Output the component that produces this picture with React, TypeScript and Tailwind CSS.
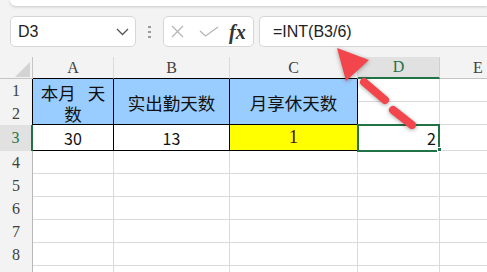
import React from "react";

const cjk = { fontFamily: '"Noto Sans CJK SC", "Noto Sans", sans-serif' };
const serif = { fontFamily: '"Liberation Serif", "DejaVu Serif", serif' };
const sans = { fontFamily: '"Liberation Sans", Arial, sans-serif' };

function ColHead({ label, cls }: { label: string; cls: string }) {
  return (
    <div className={`flex items-center justify-center text-[16px] text-[#3f3f3f] ${cls}`} style={serif}>
      {label}
    </div>
  );
}

function RowHead({ n, cls }: { n: string; cls: string }) {
  return (
    <div className={`flex items-center justify-center text-[16px] text-[#3f3f3f] ${cls}`} style={serif}>
      {n}
    </div>
  );
}

function Empty({ last }: { last?: boolean }) {
  return <div className={last ? "border-b border-[#dadada] bg-white" : "border-b border-r border-[#dadada] bg-white"} />;
}

export default function App() {
  const emptyRows = ["4", "5", "6", "7", "8", ""];
  return (
    <div className="relative w-[487px] h-[272px] overflow-hidden bg-[#f3f3f3]">
      <div className="ml-[10px] h-[6px] bg-white rounded-bl-[8px] shadow-[0_1px_3px_rgba(0,0,0,0.18)]" />

      <div className="flex items-center h-[31px] mt-[10px] pl-[10px]">
        <div className="flex items-center justify-between w-[126px] h-full bg-white border border-[#d6d6d6] rounded-[5px] pl-[7px] pr-[6px]">
          <span className="text-[16px] text-[#222]" style={sans}>D3</span>
          <svg width="13" height="8" viewBox="0 0 13 8">
            <polyline points="1,1 6.5,6.5 12,1" fill="none" stroke="#555" strokeWidth="1.3" />
          </svg>
        </div>
        <div className="w-[27px] flex flex-col items-center gap-[3px]">
          <div className="w-[3px] h-[2px] bg-[#9a9a9a]" />
          <div className="w-[3px] h-[2px] bg-[#9a9a9a]" />
          <div className="w-[3px] h-[2px] bg-[#9a9a9a]" />
        </div>
        <div className="flex items-center w-[91px] h-full bg-white border border-[#d6d6d6] rounded-[5px] pl-[6px]">
          <svg width="13" height="13" viewBox="0 0 13 13" className="ml-[1px]">
            <path d="M1,1 L12,12 M12,1 L1,12" stroke="#b4b4b4" strokeWidth="1.2" fill="none" />
          </svg>
          <svg width="20" height="11" viewBox="0 0 20 11" className="ml-[15px]">
            <polyline points="1,5 6.5,10 19,1" fill="none" stroke="#b4b4b4" strokeWidth="1.2" />
          </svg>
          <span className="ml-[10px] text-[20px] italic font-bold text-[#333] leading-none" style={serif}>fx</span>
        </div>
        <div className="flex items-center flex-1 h-full ml-[5px] bg-white border border-r-0 border-[#d6d6d6] rounded-l-[5px] pl-[13px]">
          <span className="text-[16px] text-[#222]" style={sans}>=INT(B3/6)</span>
        </div>
      </div>

      <div className="mt-[10px] grid grid-cols-[33px_81px_116px_128px_82px_47px] grid-rows-[22px_23px_23px_26px_23px_23px_23px_23px_23px_23px]">
        <div className="flex items-end justify-end border-r border-b border-[#c4c4c4] pr-[2px] pb-[1px]">
          <svg width="15" height="15" viewBox="0 0 15 15">
            <polygon points="0,15 15,15 15,0" fill="#d3d3d3" />
          </svg>
        </div>
        <ColHead label="A" cls="border-r border-[#dadada] border-b border-b-black" />
        <ColHead label="B" cls="border-r border-[#dadada] border-b border-b-black" />
        <ColHead label="C" cls="border-r border-[#dadada] border-b border-b-black" />
        <ColHead label="D" cls="bg-[#e1e1e1] border-r border-[#cfcfcf] border-b-2 border-b-[#217346] text-[#217346]" />
        <div className="border-b border-[#c4c4c4] overflow-hidden">
          <div className="w-[76px] h-full flex items-center justify-center text-[16px] text-[#3f3f3f]" style={serif}>E</div>
        </div>

        <RowHead n="1" cls="border-r border-black" />
        <div className="row-span-2 flex flex-col items-center justify-center pt-[2px] bg-[#99ccff] border-r border-b border-black text-[17.5px] leading-[21px] text-[#111]" style={cjk}>
          <div className="flex"><span>本月</span><span className="inline-block w-[12px]" /><span>天</span></div>
          <div>数</div>
        </div>
        <div className="row-span-2 flex items-center justify-center pt-[3px] bg-[#99ccff] border-r border-b border-black text-[17.5px] text-[#111]" style={cjk}>实出勤天数</div>
        <div className="row-span-2 flex items-center justify-center pt-[3px] bg-[#99ccff] border-r border-b border-black text-[17.5px] text-[#111]" style={cjk}>月享休天数</div>
        <Empty />
        <Empty last />
        <RowHead n="2" cls="border-r border-black" />
        <Empty />
        <Empty last />

        <RowHead n="3" cls="bg-[#e1e1e1] border-r-2 border-[#217346] text-[#217346]" />
        <div className="flex items-center justify-center bg-white border-r border-b border-black text-[16px] text-[#111]" style={cjk}>30</div>
        <div className="flex items-center justify-center bg-white border-r border-b border-black text-[16px] text-[#111]" style={cjk}>13</div>
        <div className="flex items-center justify-center bg-[#ffff00] border-r border-b border-black text-[19px] text-[#4a0a0a]" style={serif}>1</div>
        <div className="relative flex items-center justify-end pr-[3px] bg-white border-r border-b border-[#dadada] text-[16px] text-[#111]" style={cjk}>
          2
          <div className="absolute -left-[1px] -top-[1px] w-[83px] h-[28px] border-2 border-[#217346]" />
          <div className="absolute -right-[3px] -bottom-[2px] w-[5px] h-[5px] bg-[#217346] border border-white" />
        </div>
        <Empty last />

        {emptyRows.map((n, i) => (
          <React.Fragment key={i}>
            <RowHead n={n} cls="border-r border-[#b8b8b8]" />
            <Empty />
            <Empty />
            <Empty />
            <Empty />
            <Empty last />
          </React.Fragment>
        ))}
      </div>

      <svg className="absolute inset-0 pointer-events-none" width="487" height="272" viewBox="0 0 487 272" style={{ filter: "drop-shadow(0 1px 2px rgba(0,0,0,0.35))" }}>
        <line x1="412" y1="125" x2="393" y2="110" stroke="#f2454c" strokeWidth="8" strokeLinecap="round" />
        <line x1="385" y1="100" x2="364" y2="82" stroke="#f2454c" strokeWidth="8" strokeLinecap="round" />
        <polygon points="337,48 369,60 346,81" fill="#f2454c" />
      </svg>
    </div>
  );
}
